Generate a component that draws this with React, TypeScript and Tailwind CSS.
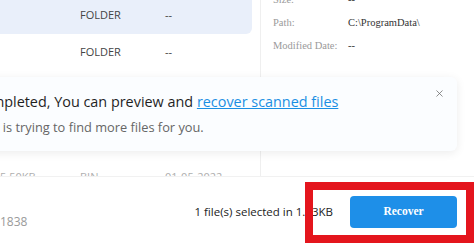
import {X} from "lucide-react";

const sans = "font-['Segoe_UI','Open_Sans',sans-serif]";

function DetailRow({label, value}: {label: string; value: string}) {
  return (
    <div className="flex h-[23px] items-center text-[10.5px]">
      <span className="w-[75px] text-[#9a9a9a]">{label}</span>
      <span className="text-[#333]">{value}</span>
    </div>
  );
}

function FolderRow({h}: {h: string}) {
  return (
    <div className={`flex items-center ${h}`}>
      <span className="ml-[80px] w-[85px]">FOLDER</span>
      <span>--</span>
    </div>
  );
}

export default function App() {
  return (
    <div className={`relative h-[243px] w-[474px] overflow-hidden bg-white ${sans}`}>
      {/* file list + details */}
      <div className="flex h-[177px] overflow-hidden border-b border-[#f1f1f1]">
        <div className="w-[260px] shrink-0 text-[11px] text-[#444]">
          <div className="flex h-[34px] w-[252px] items-center rounded-br-md bg-[#e9effa] pb-[3px]">
            <span className="ml-[80px] w-[85px]">FOLDER</span>
            <span>--</span>
          </div>
          <FolderRow h="h-[36px]" />
          <FolderRow h="h-[37px]" />
          <FolderRow h="h-[37px]" />
          <div className="mt-[25px] flex items-center whitespace-nowrap text-[11px] text-[#777] opacity-60">
            <span className="w-[80px]">5.50KB</span>
            <span className="w-[85px]">BIN</span>
            <span>01-05-2022</span>
          </div>
        </div>
        <div className="flex-1 border-l border-[#efefef] pl-[12px] font-['Liberation_Serif',serif]">
          <div className="-mt-[12px]">
            <DetailRow label="Size:" value="--" />
            <DetailRow label="Path:" value="C:\ProgramData\" />
            <DetailRow label="Modified Date:" value="--" />
          </div>
        </div>
      </div>

      {/* bottom bar */}
      <div className="flex h-[66px] items-center pt-[4px] pr-[17px]">
        <span className="mt-[20px] text-[12px] text-[#9a9a9a]">1838</span>
        <span className="ml-auto mr-[17px] text-[11.5px] text-[#222]">1 file(s) selected in 1.13KB</span>
        <button className="h-[32px] w-[107px] rounded-[4px] bg-[#1e8fe8] font-['Liberation_Serif',serif] text-[11.5px] font-bold text-white">
          Recover
        </button>
      </div>

      {/* toast */}
      <div className="absolute left-[-90px] top-[77px] h-[74px] w-[547px] rounded-md bg-[#fbfdff] pl-[30px] pt-[14px] shadow-[0_2px_10px_rgba(0,0,0,0.08)]">
        <p className="whitespace-nowrap text-[14.4px] leading-[22px] text-[#1f1f1f]">
          Scan completed, You can preview and{" "}
          <a className="text-[#1a8fe3] underline">recover scanned files</a>
        </p>
        <p className="ml-[4px] mt-[4px] whitespace-nowrap text-[12.8px] leading-[20px] text-[#666]">
          Recoverit is trying to find more files for you.
        </p>
        <X className="absolute right-[12px] top-[11px] text-[#666]" size={11} strokeWidth={1.6} />
      </div>

      {/* annotation */}
      <div className="absolute left-[305px] top-[182px] h-[61px] w-[169px] border-[8px] border-[#e4151d]" />
    </div>
  );
}
